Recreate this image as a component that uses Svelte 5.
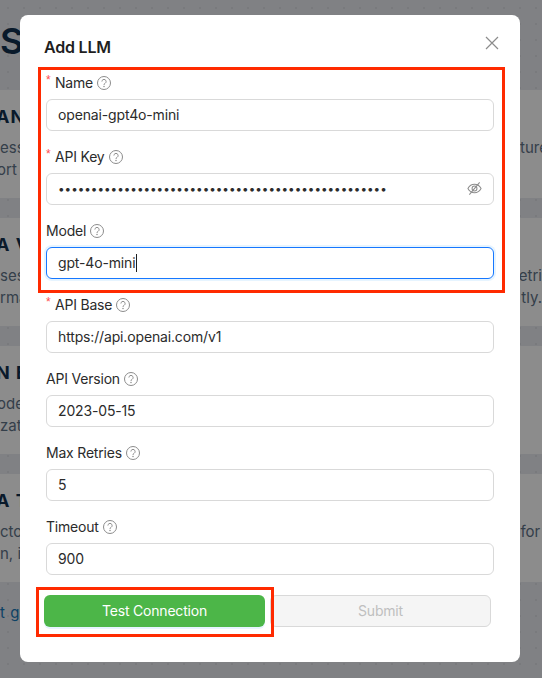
<script>
	const fields = [
		{ label: 'Name', value: 'openai-gpt4o-mini', required: true },
		{ label: 'API Key', value: 'x'.repeat(50), required: true, secret: true },
		{ label: 'Model', value: 'gpt-4o-mini', focused: true },
		{ label: 'API Base', value: 'https://api.openai.com/v1', required: true },
		{ label: 'API Version', value: '2023-05-15' },
		{ label: 'Max Retries', value: '5' },
		{ label: 'Timeout', value: '900' }
	];

	// what shows of the page behind the dialog: [left text, right text]
	const cards = [
		{ title: 'AN', lines: [['ess', 'ture', 'over-right'], ['ort t', '', 'over-left']] },
		{ title: 'A V', lines: [['ses', 'etri'], ['rma', 'tly.']] },
		{ title: 'N E', lines: [['ode', '', 'over-left'], ['zat', '']] },
		{ title: 'A T', lines: [['cto', 'for l', 'over-right'], ['n, i', '']] }
	];
</script>

<div class="page">
	<h1>S</h1>
	{#each cards as card}
		<section class="card">
			<h2>{card.title}</h2>
			{#each card.lines as line}
				<p class={line[2]}><span>{line[0]}</span><span>{line[1]}</span></p>
			{/each}
		</section>
	{/each}
	<a class="guide" href="#guide">t gu</a>
</div>

<div class="mask"></div>

<div class="modal">
	<header>
		<h3>Add LLM</h3>
		<button class="close" aria-label="Close">
			<svg viewBox="0 0 14 14" width="14" height="14"><path d="M1 1l12 12M13 1L1 13" /></svg>
		</button>
	</header>

	<form>
		{#each fields as field}
			<div class="field">
				<label>
					<span class="label-text" class:required={field.required}>{field.label}</span>
					<svg class="help" viewBox="0 0 14 14" width="14" height="14">
						<circle cx="7" cy="7" r="6.5" />
						<path d="M4.900 5.500a2.100 2.100 0 1 1 3.200 1.800c-.7.400-1.100.8-1.100 1.600" />
						<circle class="dot" cx="7" cy="10.600" r=".75" />
					</svg>
				</label>
				<div class="input" class:focused={field.focused}>
					<input class:secret={field.secret} type={field.secret ? 'password' : 'text'} value={field.value} readonly />
					{#if field.secret}
						<svg class="eye" viewBox="0 0 16 16" width="15" height="15">
							<path d="M1 8c1.600-3 4-4.500 7-4.500S13.400 5 15 8c-1.600 3-4 4.500-7 4.500S2.600 11 1 8z" />
							<circle cx="8" cy="8" r="2.600" />
							<path d="M13.500 1.500l-11 13" />
						</svg>
					{/if}
					{#if field.focused}
						<i class="caret"></i>
					{/if}
				</div>
			</div>
		{/each}

		<div class="actions">
			<button type="button" class="test">Test Connection</button>
			<button type="button" class="submit" disabled>Submit</button>
		</div>
	</form>
</div>

<div class="mark mark-fields"></div>
<div class="mark mark-test"></div>

<style>
	:global(body) {
		margin: 0;
		overflow: hidden;
		font-family: Inter, 'Liberation Sans', sans-serif;
	}

	.page {
		height: 678px;
		overflow: hidden;
		background-color: #e9ecf0;
		background-image: radial-gradient(#dcdfe3 1px, transparent 1px);
		background-size: 16px 16px;
		color: #5f7388;
	}

	h1 {
		margin: 0;
		height: 90px;
		padding-top: 19px;
		box-sizing: border-box;
		font-size: 36px;
		line-height: 44px;
		font-weight: 600;
		color: #12314f;
	}

	.card {
		height: 108px;
		margin-bottom: 20px;
		background: #fff;
		overflow: hidden;
	}

	h2 {
		margin: 15px 0 8px -4px;
		font-size: 18px;
		line-height: 24px;
		font-weight: 700;
		letter-spacing: 1px;
		color: #12314f;
		white-space: nowrap;
	}

	.card p {
		display: flex;
		justify-content: space-between;
		margin: 0;
		font-size: 15px;
		line-height: 22px;
		white-space: nowrap;
	}

	.card p.over-right {
		margin-right: -6px;
	}

	.card p.over-left {
		margin-left: -3px;
	}

	.guide {
		display: block;
		margin-top: 20px;
		font-size: 15px;
		line-height: 22px;
		letter-spacing: 0.5px;
		color: #1677b8;
		text-decoration: none;
	}

	.mask {
		position: fixed;
		inset: 0;
		background: rgba(0, 0, 0, 0.45);
	}

	.modal {
		position: fixed;
		left: 20px;
		top: 15px;
		width: 500px;
		height: 647px;
		box-sizing: border-box;
		padding: 20px 26px 0 24px;
		background: #fff;
		border-radius: 8px;
	}

	header {
		display: flex;
		justify-content: space-between;
		align-items: flex-start;
		height: 37px;
	}

	h3 {
		margin: 0;
		font-size: 16px;
		line-height: 24px;
		font-weight: 600;
		letter-spacing: -0.2px;
		color: #1f1f1f;
	}

	.close {
		padding: 0;
		margin: 1px -5px 0 0;
		border: 0;
		background: none;
		height: 14px;
		line-height: 0;
	}

	.close path {
		fill: none;
		stroke: #8c8c8c;
		stroke-width: 1.2;
	}

	form {
		padding-left: 2px;
	}

	.field {
		margin-bottom: 15px;
	}

	label {
		display: flex;
		align-items: center;
		gap: 4px;
		height: 22px;
		box-sizing: border-box;
		padding-bottom: 1px;
		margin-bottom: 5px;
		font-size: 14px;
		letter-spacing: -0.2px;
		color: #2b2b2b;
	}

	.required {
		position: relative;
		padding-left: 9px;
	}

	.required::before {
		content: '*';
		position: absolute;
		left: 0;
		top: -1px;
		color: #ff4d4f;
		font-family: 'Liberation Sans', sans-serif;
		font-size: 12px;
	}

	.help {
		flex: none;
	}

	.help circle,
	.help path {
		fill: none;
		stroke: #8c8c8c;
		stroke-width: 1;
	}

	.help .dot {
		fill: #8c8c8c;
		stroke: none;
	}

	.input {
		position: relative;
		display: flex;
		align-items: center;
		height: 32px;
		box-sizing: border-box;
		padding: 0 11px 1px;
		border: 1px solid #d9d9d9;
		border-radius: 6px;
		background: #fff;
	}

	.input.focused {
		border-color: #1677ff;
		box-shadow: 0 0 0 2px rgba(5, 145, 255, 0.1);
	}

	input {
		flex: 1;
		min-width: 0;
		padding: 0;
		border: 0;
		outline: 0;
		background: none;
		font: inherit;
		font-size: 14px;
		letter-spacing: -0.15px;
		color: #2b2b2b;
	}

	input.secret {
		font-size: 11.7px;
		letter-spacing: 0;
	}

	.eye {
		flex: none;
	}

	.eye path,
	.eye circle {
		fill: none;
		stroke: #8c8c8c;
		stroke-width: 1.1;
	}

	.caret {
		position: absolute;
		left: 89px;
		top: 6px;
		width: 1px;
		height: 18px;
		background: #1f1f1f;
	}

	.actions {
		display: grid;
		grid-template-columns: 221px 221px;
		gap: 5px;
		margin: 20px 0 0 -2px;
	}

	.actions button {
		height: 32px;
		padding: 0 0 2px;
		border-radius: 6px;
		font: inherit;
		font-size: 14px;
		letter-spacing: -0.2px;
	}

	.test {
		border: 0;
		background: #4cb648;
		color: #fff;
		box-shadow: 0 2px 0 rgba(5, 145, 255, 0.1);
	}

	.submit {
		border: 1px solid #d9d9d9;
		background: #f5f5f5;
		color: #bfbfbf;
	}

	.mark {
		position: fixed;
		box-sizing: border-box;
		border: 3px solid #ff2a00;
	}

	.mark-fields {
		left: 38px;
		top: 67px;
		width: 467px;
		height: 226px;
	}

	.mark-test {
		left: 36px;
		top: 587px;
		width: 238px;
		height: 50px;
	}
</style>
